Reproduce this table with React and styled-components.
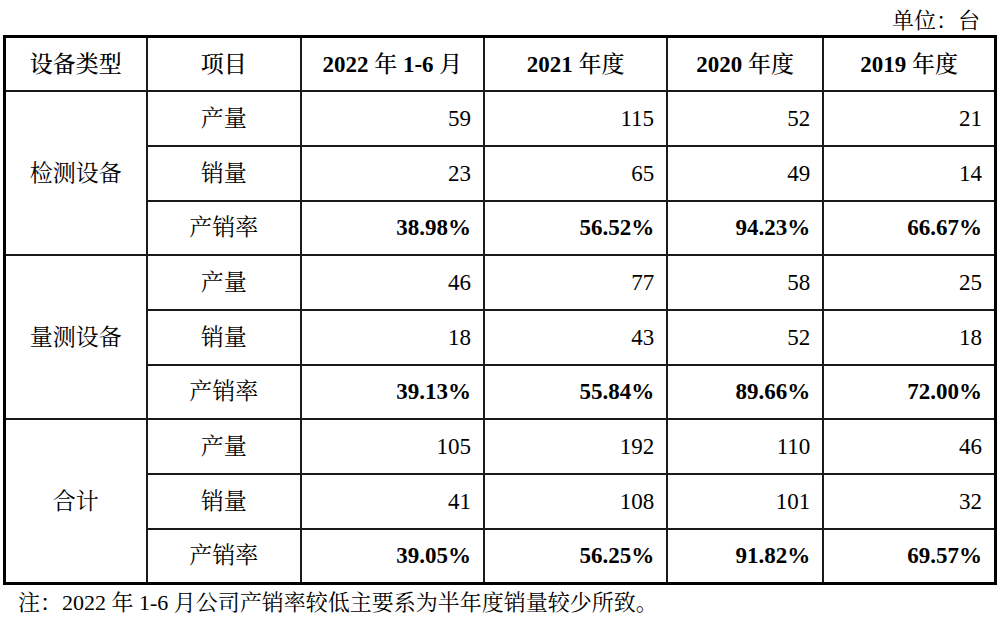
import React from "react";
import styled, { createGlobalStyle } from "styled-components";

const Global = createGlobalStyle`
  html, body { margin: 0; padding: 0; background: #fff; }
  body {
    font-family: "Liberation Serif", "Noto Serif CJK SC", "Noto Sans CJK SC", serif;
    color: #000;
  }
`;

const Page = styled.div`
  width: 994px;
  margin-left: 3px;
`;

const Unit = styled.div`
  height: 35px;
  display: flex;
  align-items: center;
  justify-content: flex-end;
  padding-right: 17px;
  font-size: 22px;
  box-sizing: border-box;
  padding-top: 2px;
`;

const Table = styled.table`
  width: 994px;
  border-collapse: collapse;
  table-layout: fixed;
  border: 3px solid #000;
  font-size: 23px;
`;

const Row = styled.tr`
  height: 54.7px;
`;

const Cell = styled.td`
  border: 2px solid #1a1a1a;
  padding: 0 12px;
  text-align: ${(p) => (p.$num ? "right" : "center")};
  font-weight: ${(p) => (p.$bold ? 700 : 400)};
  vertical-align: middle;
  white-space: nowrap;
  line-height: 1;
`;

const Head = styled(Cell).attrs({ as: "th" })`
  font-weight: 700;
  text-align: center;
`;

const Han = styled.span`
  font-weight: 500;
`;

const Note = styled.div`
  font-size: 22px;
  padding: 3px 0 0 15px;
  line-height: 30px;
`;

const cols = [142, 154, 183, 183, 156, 172];
const heads = [
  [["设备类型", true]],
  [["项目", true]],
  [["2022 ", false], ["年", true], [" 1-6 ", false], ["月", true]],
  [["2021 ", false], ["年度", true]],
  [["2020 ", false], ["年度", true]],
  [["2019 ", false], ["年度", true]],
];

const groups = [
  { name: "检测设备", rows: [["59", "115", "52", "21"], ["23", "65", "49", "14"], ["38.98%", "56.52%", "94.23%", "66.67%"]] },
  { name: "量测设备", rows: [["46", "77", "58", "25"], ["18", "43", "52", "18"], ["39.13%", "55.84%", "89.66%", "72.00%"]] },
  { name: "合计", rows: [["105", "192", "110", "46"], ["41", "108", "101", "32"], ["39.05%", "56.25%", "91.82%", "69.57%"]] },
];
const items = ["产量", "销量", "产销率"];

export default function App() {
  return (
    <>
      <Global />
      <Page>
        <Unit>单位：台</Unit>
        <Table>
          <colgroup>
            {cols.map((w, i) => (
              <col key={i} style={{ width: w }} />
            ))}
          </colgroup>
          <thead>
            <Row>
              {heads.map((h, i) => (
                <Head key={i}>
                  {h.map(([t, han], j) => (han ? <Han key={j}>{t}</Han> : <React.Fragment key={j}>{t}</React.Fragment>))}
                </Head>
              ))}
            </Row>
          </thead>
          <tbody>
            {groups.map((g) =>
              g.rows.map((r, ri) => (
                <Row key={g.name + ri}>
                  {ri === 0 && <Cell rowSpan={3}>{g.name}</Cell>}
                  <Cell>{items[ri]}</Cell>
                  {r.map((v, vi) => (
                    <Cell key={vi} $num $bold={ri === 2}>
                      {v}
                    </Cell>
                  ))}
                </Row>
              ))
            )}
          </tbody>
        </Table>
        <Note>注：2022 年 1-6 月公司产销率较低主要系为半年度销量较少所致。</Note>
      </Page>
    </>
  );
}
